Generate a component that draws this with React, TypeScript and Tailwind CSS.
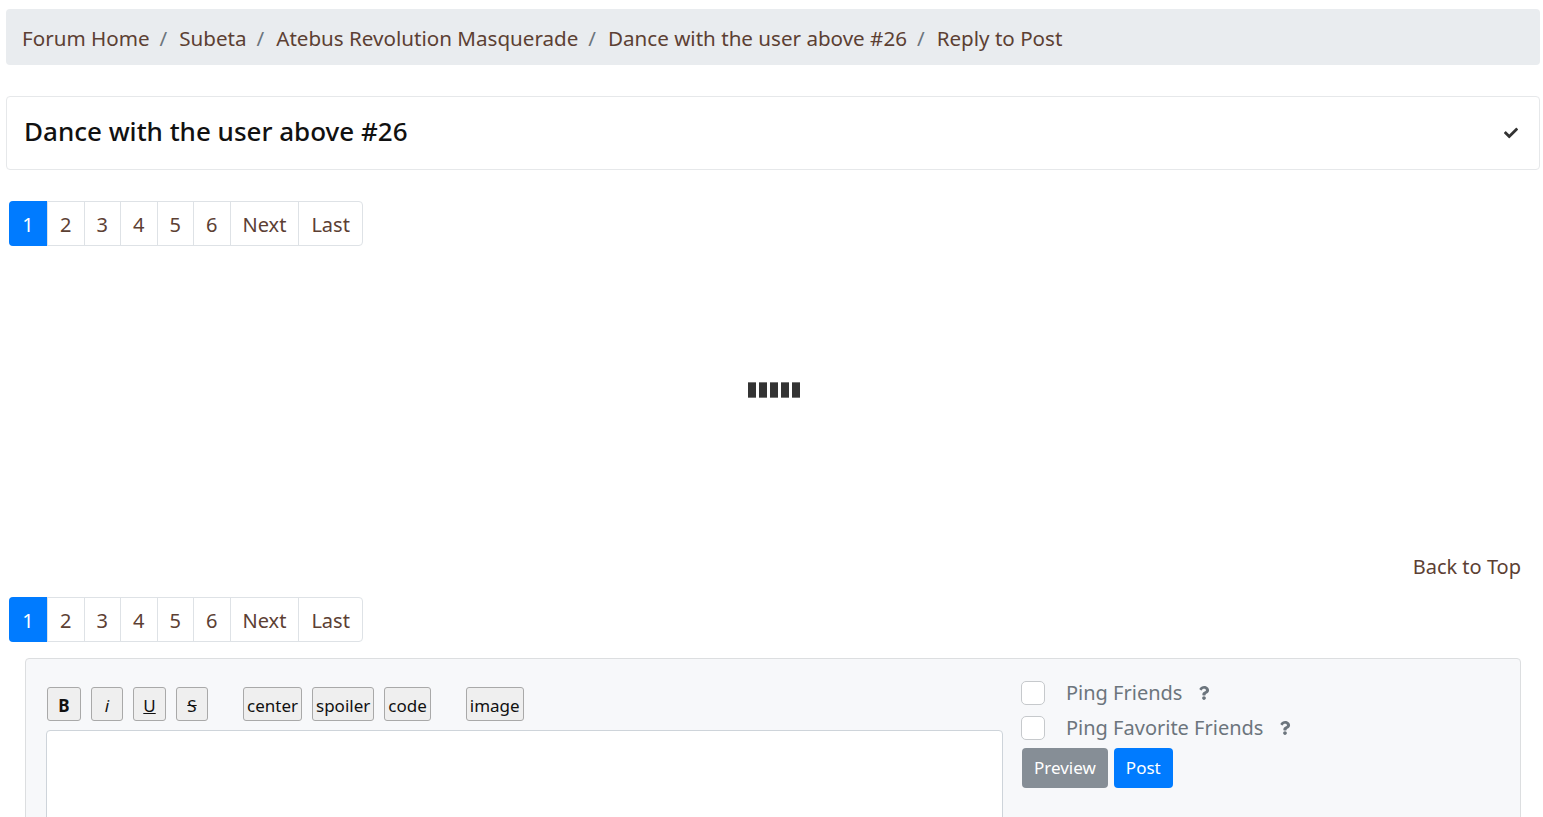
import React from 'react';
import { FaCheck, FaQuestion } from 'react-icons/fa';

const crumbs = ['Forum Home', 'Subeta', 'Atebus Revolution Masquerade', 'Dance with the user above #26'];
const pages = ['1', '2', '3', '4', '5', '6', 'Next', 'Last'];

const Pagination: React.FC = () => (
  <ul className="ml-[3px] flex w-max rounded-[4px] border border-[#dee2e6]">
    {pages.map((p, i) => (
      <li
        key={p}
        className={`flex h-[43px] items-center justify-center px-3 pt-[2px] text-[20px] ${
          i === 0
            ? 'w-[38px] -my-px -ml-px h-[45px] rounded-l-[4px] bg-[#007bff] text-white'
            : 'border-l border-[#dee2e6] text-[#5c4033]'
        } ${i > 0 && i < 6 ? 'w-[36.5px]' : ''}`}
      >
        {p}
      </li>
    ))}
  </ul>
);

const ToolButton: React.FC<{ label: React.ReactNode; className?: string }> = ({ label, className = '' }) => (
  <button
    className={`h-[34px] rounded-[3px] border border-[#a9a9a9] bg-[#efefef] px-[3px] pt-[3px] text-[17px] leading-none text-[#111] ${className}`}
  >
    {label}
  </button>
);

const PingOption: React.FC<{ label: string }> = ({ label }) => (
  <label className="flex h-[35px] items-center">
    <span className="h-[24px] w-[24px] rounded-[5px] border border-[#c6c9cc] bg-white" />
    <span className="ml-[21px] text-[20px] text-[#6c757d]">{label}</span>
    <FaQuestion className="ml-[15px] text-[#6c757d]" size={14} />
  </label>
);

export default function App() {
  return (
    <div className="h-[817px] overflow-hidden bg-white pl-[6px] pr-[3px] pt-[9px] text-[#212529] [font-family:'Noto_Sans',sans-serif]">
      <nav className="flex h-[56px] items-center rounded-[4px] bg-[#e9ecef] px-4 pt-[3px] text-[20.6px] text-[#5c4033]">
        {crumbs.map((c) => (
          <React.Fragment key={c}>
            <span>{c}</span>
            <span className="pl-[10px] pr-[12px] text-[#6c757d]">/</span>
          </React.Fragment>
        ))}
        <span>Reply to Post</span>
      </nav>

      <div className="mt-[31px] flex h-[74px] items-center justify-between rounded-[4px] border border-[#e6e8ea] pl-[17px] pr-[21px]">
        <h5 className="-mt-[4px] text-[26px] font-medium text-[#111]">Dance with the user above #26</h5>
        <FaCheck className="text-[#333]" size={14} />
      </div>

      <div className="mt-[31px]">
        <Pagination />
      </div>

      <div className="flex h-[306px] items-center justify-center">
        <div className="-mt-[18px] flex gap-[3px] pl-[2px]">
          {[0, 1, 2, 3, 4].map((b) => (
            <span key={b} className="h-[16px] w-[8px] border-y border-[#777] bg-[#333]" />
          ))}
        </div>
      </div>

      <div className="flex justify-end pr-[19px]">
        <a className="text-[20px] text-[#5c4033]">Back to Top</a>
      </div>

      <div className="mt-[15px]">
        <Pagination />
      </div>

      <div className="mx-[19px] mt-[16px] h-[180px] rounded-[4px] border border-[#dcdee0] bg-[#f7f8fa] pl-[20px] pr-[20px] pt-[22px]">
        <div className="flex gap-[18px]">
          <div className="w-[957px]">
            <div className="mt-[6px] flex items-center pl-[1px]">
              <ToolButton label={<b>B</b>} className="w-[34px]" />
              <ToolButton label={<i>i</i>} className="ml-[10px] w-[32px]" />
              <ToolButton label={<u>U</u>} className="ml-[10px] w-[33px]" />
              <ToolButton label={<s>S</s>} className="ml-[10px] w-[32px]" />
              <ToolButton label="center" className="ml-[35px]" />
              <ToolButton label="spoiler" className="ml-[10px]" />
              <ToolButton label="code" className="ml-[10px]" />
              <ToolButton label="image" className="ml-[35px]" />
            </div>
            <div className="mt-[9px] h-[110px] rounded-[4px] border border-[#ced4da] bg-white" />
          </div>
          <div className="-mt-[6px]">
            <PingOption label="Ping Friends" />
            <PingOption label="Ping Favorite Friends" />
            <div className="mt-[3px] flex gap-[6px] pl-[1px]">
              <button className="h-[40px] rounded-[4px] bg-[#868e96] px-3 text-[17px] text-white">Preview</button>
              <button className="h-[40px] rounded-[4px] bg-[#007bff] px-3 text-[17px] text-white">Post</button>
            </div>
          </div>
        </div>
      </div>
    </div>
  );
}
